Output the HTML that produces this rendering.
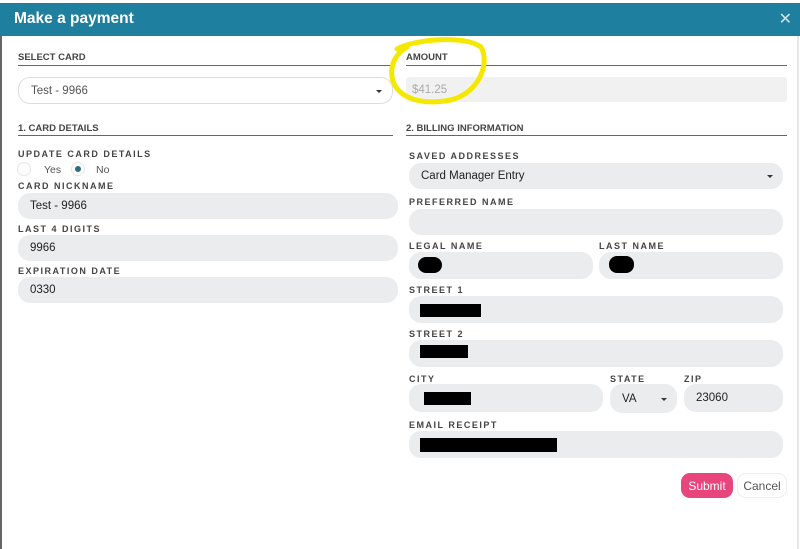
<!DOCTYPE html>
<html><head><style>
body{margin:0;width:800px;height:549px;background:#fff;font-family:"Liberation Sans",sans-serif;position:relative;overflow:hidden}
.a{position:absolute}
.hd{left:0;top:3px;width:800px;height:33px;background:#1f7f9f}
.t{left:14px;top:10px;color:#fff;font-weight:bold;font-size:15.5px}
.x{right:8px;top:9px;color:#cfe3ea;font-size:16px}
.sec{font-size:9.5px;font-weight:bold;color:#444}
.ln{height:1px;background:#666}
.lb{font-size:9px;font-weight:bold;color:#444;letter-spacing:1.5px}
.in{background:#ebecee;border-radius:12px;font-size:11.5px;color:#222;box-sizing:border-box;padding-left:12px;display:flex;align-items:center}
.bk{background:#000}
.car{position:absolute;right:10px;top:50%;margin-top:-1px;border-left:3px solid transparent;border-right:3px solid transparent;border-top:3px solid #333}
</style></head><body>
<div class="a" style="left:0;top:36px;width:2px;height:513px;background:#666"></div>
<div class="a" style="left:797px;top:36px;width:2px;height:513px;background:#e6e6e6"></div>
<div class="a hd"></div>
<div class="a t">Make a payment</div>
<div class="a x">✕</div>

<div class="a sec" style="left:18px;top:52px">SELECT CARD</div>
<div class="a ln" style="left:18px;top:65px;width:375px"></div>
<div class="a sec" style="left:406px;top:52px">AMOUNT</div>
<div class="a ln" style="left:406px;top:65px;width:381px"></div>
<div class="a in" style="left:18px;top:77px;width:375px;height:27px;background:#fff;border:1px solid #ddd;color:#555">Test - 9966<span class="car"></span></div>
<div class="a in" style="left:406px;top:77px;width:381px;height:25px;background:#f1f1f1;border-radius:3px;color:#aaa;padding-left:6px">$41.25</div>

<div class="a sec" style="left:18px;top:123px">1. CARD DETAILS</div>
<div class="a ln" style="left:18px;top:135px;width:375px"></div>
<div class="a sec" style="left:406px;top:123px">2. BILLING INFORMATION</div>
<div class="a ln" style="left:406px;top:135px;width:381px"></div>

<div class="a lb" style="left:18px;top:149px">UPDATE CARD DETAILS</div>
<div class="a" style="left:17px;top:162px;width:14px;height:14px;border-radius:50%;border:1px solid #e6e6e6;box-sizing:border-box"></div>
<div class="a" style="left:44px;top:164px;font-size:10.5px;color:#555">Yes</div>
<div class="a" style="left:71px;top:162px;width:14px;height:14px;border-radius:50%;border:1px solid #e6e6e6;box-sizing:border-box"><div style="margin:3px;width:6px;height:6px;border-radius:50%;background:#2a6f80"></div></div>
<div class="a" style="left:96px;top:164px;font-size:10.5px;color:#555">No</div>
<div class="a lb" style="left:18px;top:181px">CARD NICKNAME</div>
<div class="a in" style="left:18px;top:193px;width:380px;height:26px">Test - 9966</div>
<div class="a lb" style="left:18px;top:224px">LAST 4 DIGITS</div>
<div class="a in" style="left:18px;top:235px;width:380px;height:26px">9966</div>
<div class="a lb" style="left:18px;top:266px">EXPIRATION DATE</div>
<div class="a in" style="left:18px;top:277px;width:380px;height:26px">0330</div>

<div class="a lb" style="left:409px;top:151px">SAVED ADDRESSES</div>
<div class="a in" style="left:409px;top:163px;width:374px;height:26px">Card Manager Entry<span class="car"></span></div>
<div class="a lb" style="left:409px;top:197px">PREFERRED NAME</div>
<div class="a in" style="left:409px;top:209px;width:374px;height:26px"></div>
<div class="a lb" style="left:409px;top:241px">LEGAL NAME</div>
<div class="a lb" style="left:599px;top:241px">LAST NAME</div>
<div class="a in" style="left:409px;top:252px;width:184px;height:27px"></div>
<div class="a in" style="left:599px;top:252px;width:184px;height:27px"></div>
<div class="a bk" style="left:418px;top:257px;width:24px;height:16px;border-radius:8px"></div>
<div class="a bk" style="left:609px;top:256px;width:25px;height:17px;border-radius:8px"></div>
<div class="a lb" style="left:409px;top:285px">STREET 1</div>
<div class="a in" style="left:409px;top:296px;width:374px;height:27px"></div>
<div class="a bk" style="left:420px;top:304px;width:61px;height:13px"></div>
<div class="a lb" style="left:409px;top:329px">STREET 2</div>
<div class="a in" style="left:409px;top:340px;width:374px;height:27px"></div>
<div class="a bk" style="left:420px;top:345px;width:48px;height:13px"></div>
<div class="a lb" style="left:409px;top:374px">CITY</div>
<div class="a lb" style="left:610px;top:374px">STATE</div>
<div class="a lb" style="left:684px;top:374px">ZIP</div>
<div class="a in" style="left:409px;top:384px;width:194px;height:28px"></div>
<div class="a bk" style="left:424px;top:392px;width:47px;height:13px"></div>
<div class="a in" style="left:610px;top:384px;width:67px;height:29px">VA<span class="car"></span></div>
<div class="a in" style="left:684px;top:384px;width:99px;height:28px">23060</div>
<div class="a lb" style="left:409px;top:420px">EMAIL RECEIPT</div>
<div class="a in" style="left:409px;top:431px;width:374px;height:27px"></div>
<div class="a bk" style="left:420px;top:438px;width:137px;height:14px"></div>

<div class="a" style="left:681px;top:473px;width:52px;height:25px;background:#e8457c;border-radius:9px;color:#fff;font-size:12px;display:flex;align-items:center;justify-content:center">Submit</div>
<div class="a" style="left:737px;top:473px;width:50px;height:25px;border:1px solid #eee;box-sizing:border-box;border-radius:9px;color:#555;font-size:12px;display:flex;align-items:center;justify-content:center">Cancel</div>

<svg class="a" style="left:385px;top:35px" width="110" height="75"><path d="M12 14 C30 4 80 0 96 12 C106 30 92 62 60 66 C30 70 10 60 7 42 C5 28 12 18 22 12" fill="none" stroke="#f5e800" stroke-width="5" stroke-linecap="round"/></svg>
</body></html>
